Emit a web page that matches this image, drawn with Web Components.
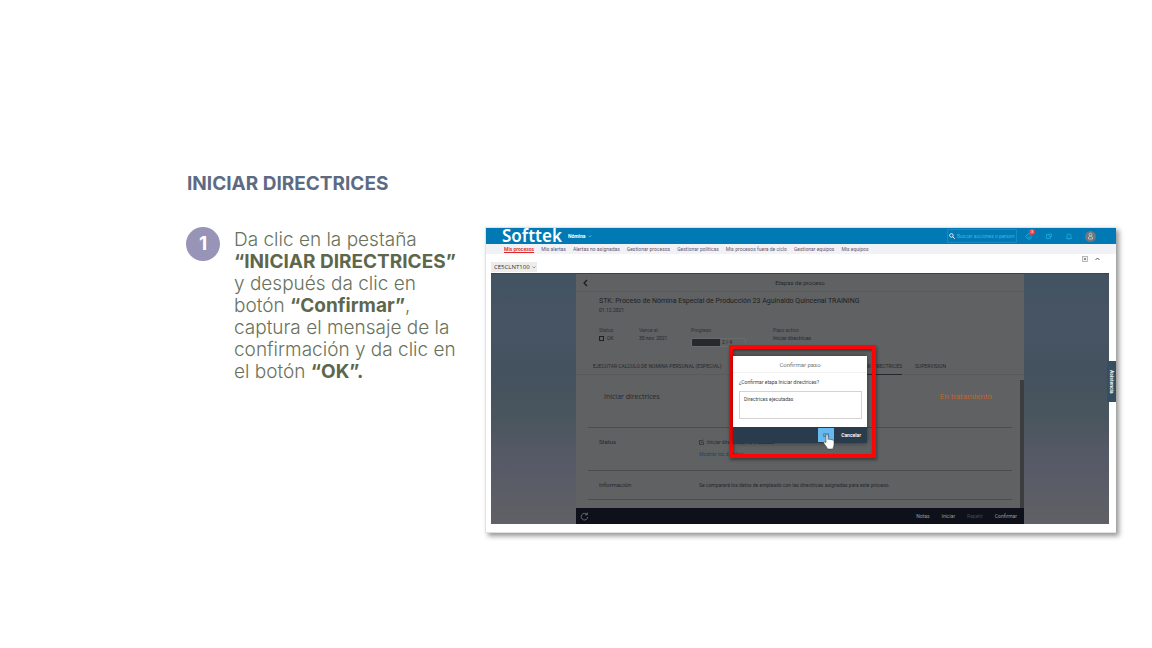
<!DOCTYPE html>
<html lang="es">
<head>
<meta charset="utf-8">
<meta name="viewport" content="width=device-width, initial-scale=1">
<title>Iniciar directrices</title>
<style>
body { margin: 0; background: #fff; font-family: Inter, "Noto Sans", sans-serif; }
</style>
</head>
<body>
<guide-slide>
  <span slot="title">INICIAR DIRECTRICES</span>
  <guide-step slot="steps" number="1">Da clic en la pestaña<br><b>“INICIAR DIRECTRICES”</b><br>y después da clic en<br>botón <b>“Confirmar”</b>,<br>captura el mensaje de la<br>confirmación y da clic en<br>el botón <b>“OK”.</b></guide-step>
  <payroll-app slot="figure">
    <process-panel slot="panel"></process-panel>
    <confirm-dialog slot="dialog"></confirm-dialog>
  </payroll-app>
</guide-slide>

<template id="guide-slide">
  <style>
    :host { display: grid; grid-template-columns: 272px minmax(0, 1fr); column-gap: 27px; row-gap: 32px; padding: 173px 36px 48px 186px; align-items: start; }
    h1 { grid-column: 1 / -1; margin: 0 0 0 1px; font-size: 19px; line-height: 22px; font-weight: 700; color: #5d6b82; }
  </style>
  <h1><slot name="title"></slot></h1>
  <slot name="steps"></slot>
  <slot name="figure"></slot>
</template>

<template id="guide-step">
  <style>
    :host { display: grid; grid-template-columns: 34px 1fr; gap: 14px; color: #69725c; white-space: nowrap; }
    .dot { width: 34px; height: 34px; border-radius: 50%; background: #9894b8; color: #fff; font-size: 19px; font-weight: 700; line-height: 34px; text-align: center; }
    p { margin: 2px 0 0; font-size: 19px; line-height: 22px; font-weight: 300; }
    ::slotted(b) { color: #5c674b; font-weight: 700; }
  </style>
  <div class="dot"></div>
  <p><slot></slot></p>
</template>

<template id="payroll-app">
  <style>
    :host { display: block; position: relative; background: #fff; border: 1px solid #dfe2e4; border-right: 0; box-shadow: 3px 3px 5px rgba(0,0,0,.42); font-family: Roboto, "Noto Sans", sans-serif; font-size: 5px; line-height: 8px; color: #444; }
    * { box-sizing: border-box; }
    header { display: flex; align-items: center; height: 16px; padding: 0 20px 0 16px; background: #0079b4; color: #fff; }
    .logo { font-family: "Noto Sans", sans-serif; font-size: 17px; line-height: 16px; font-weight: 600; margin-right: 6px; }
    select { appearance: none; border: 0; padding: 0; margin: 0; background: none; font: inherit; color: inherit; }
    header select { font-weight: 700; }
    .pick { display: flex; align-items: center; gap: 2px; }
    .search { display: flex; align-items: center; gap: 2px; width: 70px; height: 14px; margin-left: auto; margin-right: 8px; padding: 0 1px; border: 1px solid #168bc3; }
    .search input { flex: 1; min-width: 0; border: 0; padding: 0; background: none; font: inherit; color: #35b8e8; outline: 0; }
    .search input::placeholder { color: #35b8e8; opacity: 1; }
    .icons { display: flex; align-items: center; gap: 12px; }
    button { border: 0; padding: 0; background: none; font: inherit; color: inherit; display: block; }
    svg { display: block; }
    .bell { position: relative; }
    .count { position: absolute; left: 4px; top: -4px; width: 6px; height: 6px; border-radius: 50%; background: #ee4247; color: #fff; font-size: 4px; line-height: 6px; text-align: center; }
    .me { width: 11px; height: 11px; border-radius: 50%; background: #70777c; display: grid; place-items: center; }
    nav { display: flex; gap: 7px; height: 10px; padding: 1px 18px 0; background: #f1f2f5; }
    nav a { color: #665572; text-decoration: none; white-space: nowrap; }
    nav a[aria-current] { color: #e0272e; font-weight: 600; text-decoration: underline; }
    .strip { display: flex; justify-content: space-between; height: 19px; padding: 0 16px 0 5px; }
    .strip .pick { align-self: flex-end; height: 10px; margin-bottom: 1px; padding: 0 1px 0 3px; background: #ececec; font-size: 7px; color: #333; }
    .strip select { font-family: "Open Sans", sans-serif; font-size: 6px; }
    .tools { display: flex; gap: 7px; padding-top: 2px; align-items: center; height: 8px; }
    .stage { margin: 0 7px 8px 5px; border-top: 1px solid #304854; display: grid; grid-template-columns: 85px minmax(0,1fr) 85px; background: linear-gradient(#435361, #475464 20%, #44525f 40%, #4a565e 58%, #555966 72%, #5b5d66 86%, #606165); }
    .stage ::slotted(*) { grid-column: 2; }
    .help { position: absolute; right: 0; top: 133px; width: 9px; height: 41px; background: #354f61; color: #fff; writing-mode: vertical-rl; text-align: center; font-weight: 600; line-height: 9px; }
    .over { position: absolute; left: 243px; top: 117px; }
  </style>
  <header>
    <span class="logo">Softtek</span>
    <span class="pick"><select aria-label="Módulo"><option>Nómina</option></select><svg width="4" height="3" viewBox="0 0 4 3"><path d="M.5.5 2 2 3.500.5" fill="none" stroke="#46c0ef" stroke-width=".8"/></svg></span>
    <label class="search"><svg width="6" height="6" viewBox="0 0 6 6"><circle cx="2.400" cy="2.400" r="1.800" fill="none" stroke="#fff" stroke-width=".8"/><path d="m3.700 3.700 2 2" stroke="#fff"/></svg><input type="text" aria-label="Buscar" placeholder="Buscar acciones o person..."></label>
    <div class="icons">
      <button class="bell" aria-label="Tareas"><svg width="8" height="7" viewBox="0 0 8 7"><path d="M5 1H3L.8 3.500 3 6h2l2-2.500M3 3.500l1 1 2-2" fill="none" stroke="#27b2e4" stroke-width=".8"/></svg><span class="count">3</span></button>
      <button aria-label="Notas"><svg width="8" height="7" viewBox="0 0 8 7"><path d="M4 1.500H1.500v4h4V4M4 1h2.500v2.500H4z" fill="none" stroke="#27b2e4" stroke-width=".7"/></svg></button>
      <button aria-label="Avisos"><svg width="8" height="7" viewBox="0 0 8 7"><path d="M2 5V3a2 2 0 0 1 4 0v2l.6.5H1.400zM3.500 6.500h1" fill="none" stroke="#27b2e4" stroke-width=".7"/></svg></button>
      <button class="me" aria-label="Perfil"><svg width="7" height="8" viewBox="0 0 7 8"><circle cx="3.500" cy="2.500" r="1.400" fill="none" stroke="#ccd0d2" stroke-width=".8"/><path d="M1.500 7V6a2 2 0 0 1 4 0v1z" fill="none" stroke="#ccd0d2" stroke-width=".8"/></svg></button>
    </div>
  </header>
  <nav><a href="#procesos" aria-current="page">Mis procesos</a><a href="#alertas">Mis alertas</a><a href="#noasig">Alertas no asignadas</a><a href="#gproc">Gestionar procesos</a><a href="#gpol">Gestionar políticas</a><a href="#ciclo">Mis procesos fuera de ciclo</a><a href="#geq">Gestionar equipos</a><a href="#equipos">Mis equipos</a></nav>
  <div class="strip">
    <span class="pick"><select aria-label="Sistema"><option>CE5CLNT100</option></select><svg width="4" height="3" viewBox="0 0 4 3"><path d="M.5.5 2 2 3.500.5" fill="none" stroke="#777" stroke-width=".7"/></svg></span>
    <span class="tools"><button aria-label="Ampliar"><svg width="6" height="6" viewBox="0 0 6 6"><rect x=".5" y=".5" width="5" height="5" fill="#f2f2f2" stroke="#aaa" stroke-width=".8"/><path d="m2 2 2 2M4 2 2 4" stroke="#777" stroke-width=".8"/></svg></button><button aria-label="Contraer"><svg width="5" height="6" viewBox="0 0 5 6"><path d="m.5 4 2-2 2 2" fill="none" stroke="#555"/></svg></button></span>
  </div>
  <div class="stage"><slot name="panel"></slot></div>
  <button class="help">Asistencia</button>
  <div class="over"><slot name="dialog"></slot></div>
</template>

<template id="process-panel">
  <style>
    :host { display: block; background: #606163; color: #26282b; font-size: 5px; line-height: 8px; white-space: nowrap; }
    * { box-sizing: border-box; }
    button { border: 0; padding: 0; background: none; font: inherit; color: inherit; }
    svg { display: block; }
    h2, h3, h4, p, dl, dd { margin: 0; font-weight: 400; }
    .bar { display: grid; grid-template-columns: 14px 1fr 14px; align-items: center; height: 18px; padding: 0 7px; border-bottom: 1px solid #5a5b5d; text-align: center; }
    .bar h2 { font-size: 6px; line-height: 8px; }
    .head { padding: 4px 23px 0; height: 69px; }
    .head h3 { font-size: 7px; line-height: 10px; color: #1d1f22; }
    dl { display: grid; grid-template-columns: 40px 52px 82px 1fr; margin-top: 12px; }
    dd { display: flex; align-items: center; gap: 3px; }
    dt { color: #303235; }
    .meter { width: 55px; height: 9px; margin-top: 4px; border: 1px solid #696a6c; background: linear-gradient(90deg, #27292d 28px, transparent 28px); border-radius: 2px; padding-left: 30px; line-height: 7px; }
    .tabs { display: flex; height: 14px; padding: 1px 17px 0; border-bottom: 1px solid #595a5c; }
    .tabs button { height: 13px; padding: 0 0 4px; margin-right: 13px; line-height: 9px; }
    .tabs button:first-child { width: 127px; text-align: left; margin-right: 107px; }
    .tabs button[aria-selected=true] { width: 75px; text-align: right; border-bottom: 1px solid #24272b; }
    .body { border-right: 4px solid #3c3d3f; margin-top: 5px; padding: 0 8px 0 12px; }
    .lead { display: flex; justify-content: space-between; height: 47px; padding: 12px 20px 0 16px; font-size: 8px; line-height: 10px; }
    .lead h3 { font-family: "Open Sans", sans-serif; font-size: 7px; }
    .lead p { color: #c0642a; }
    .row { display: grid; grid-template-columns: 100px 1fr; padding: 10px 0 0 11px; height: 43px; border-top: 1px solid #4b4c4e; }
    .row.info { height: 38px; }
    .row.info::after { content: ""; grid-column: 1 / -1; margin: 7px 0 5px -11px; border-top: 1px solid #4b4c4e; }
    .row h4 { font-size: 6px; }
    .msg { display: flex; gap: 3px; align-items: center; }
    a { display: block; margin-top: 4px; color: #1c4565; text-decoration: none; }
    footer { display: flex; align-items: center; gap: 12px; height: 16px; padding: 0 7px 0 4px; background: #0e1119; color: #989ca3; }
    footer button:first-child { margin-right: auto; }
    footer button:disabled { color: #45494f; }
  </style>
  <div class="bar"><button aria-label="Atrás"><svg width="5" height="8" viewBox="0 0 5 8"><path d="M4 1 1 4l3 3" fill="none" stroke="#17191c" stroke-width="1.200"/></svg></button><h2>Etapas de proceso</h2></div>
  <div class="head">
    <h3>STK: Proceso de Nómina Especial de Producción 23 Aguinaldo Quincenal TRAINING</h3>
    <p>01.12.2021</p>
    <dl>
      <div><dt>Status</dt><dd><svg width="5" height="5" viewBox="0 0 5 5"><rect x=".5" y=".5" width="4" height="4" fill="none" stroke="#202124"/></svg>OK</dd></div>
      <div><dt>Vence el</dt><dd>30 nov. 2021</dd></div>
      <div><dt>Progreso</dt><dd class="meter" role="progressbar" aria-valuenow="2" aria-valuemax="4">2 / 4</dd></div>
      <div><dt>Paso activo</dt><dd>Iniciar directrices</dd></div>
    </dl>
  </div>
  <div class="tabs" role="tablist"><button role="tab">EJECUTAR CALCULO DE NOMINA PERSONAL (ESPECIAL)</button><button role="tab" aria-selected="true">INICIAR DIRECTRICES</button><button role="tab">SUPERVISION</button></div>
  <div class="body">
    <div class="lead"><h3>Iniciar directrices</h3><p>En tratamiento</p></div>
    <div class="row"><h4>Status</h4><div><div class="msg"><svg width="5" height="6" viewBox="0 0 5 6"><path d="M4.500 3v2.500h-4v-4H3M1.500 3l1 1L4.800.5" fill="none" stroke="#2b2d30" stroke-width=".7"/></svg>Iniciar directrices ha finalizado</div><a href="#detalles">Mostrar los detalles</a></div></div>
    <div class="row info"><h4>Información</h4><p>Se comparará los datos de empleado con las directrices asignadas para este proceso.</p></div>
  </div>
  <footer><button aria-label="Actualizar"><svg width="9" height="9" viewBox="0 0 9 9"><path d="M7 2.500A3.300 3.300 0 1 0 7.800 5M7.300.5v2.300H5" fill="none" stroke="#777b82" stroke-width=".8"/></svg></button><button>Notas</button><button>Iniciar</button><button disabled>Repetir</button><button>Confirmar</button></footer>
</template>

<template id="confirm-dialog">
  <style>
    :host { display: block; position: relative; width: 147px; height: 113px; border: 4px solid #fb0505; box-sizing: border-box; padding: 7px 5px 0 0; box-shadow: 1px 2px 3px rgba(0,0,0,.4), inset 1px 2px 3px rgba(0,0,0,.4); }
    * { box-sizing: border-box; }
    .box { background: #fff; box-shadow: 0 0 5px rgba(0,0,0,.5); color: #444; white-space: nowrap; }
    h2 { margin: 0; height: 17px; font-size: 6px; line-height: 17px; font-weight: 400; text-align: center; color: #777; border-bottom: 1px solid #f2f2f2; }
    label { display: block; padding: 5px 6px 0; line-height: 8px; }
    textarea { display: block; width: 123px; height: 28px; margin: 5px 0 0 6px; padding: 3px 4px; border: 1px solid #d3d3d3; resize: none; overflow: hidden; font: inherit; line-height: 8px; color: #444; background: #fff; outline: 0; }
    .foot { display: flex; justify-content: flex-end; gap: 7px; margin-top: 8px; padding: 1px 6px 0; height: 16px; background: #293c4e; color: #fff; }
    button { border: 0; padding: 0; height: 14px; background: none; color: inherit; font: inherit; font-weight: 600; }
    .ok { width: 16px; background: #67b9ef; color: #326f9e; }
    svg { position: absolute; left: 90px; top: 85px; }
  </style>
  <div class="box" role="dialog" aria-label="Confirmar paso">
    <h2>Confirmar paso</h2>
    <label for="msg">¿Confirmar etapa Iniciar directrices?</label>
    <textarea id="msg">Directrices ejecutadas</textarea>
    <div class="foot"><button class="ok">OK</button><button>Cancelar</button></div>
  </div>
  <svg width="13" height="16" viewBox="0 0 13 16" aria-hidden="true"><path d="M3 1.500c0-1.300 2-1.300 2 0v4c.3-.8 1.800-.7 2 .3.400-.7 1.700-.5 2 .4.500-.6 1.900-.3 2 .800v3.500c0 1.500-.8 2-1 4.500H4.500C4.200 13 2 11.500.8 9 .4 7.800 1.700 7.200 3 8.700z" fill="#fff" stroke="#333" stroke-width=".5"/></svg>
</template>

<script>
class TemplateElement extends HTMLElement {
  constructor() {
    super();
    this.attachShadow({ mode: "open" }).append(document.getElementById(this.localName).content.cloneNode(true));
  }
}
class GuideSlide extends TemplateElement {}
class GuideStep extends TemplateElement {
  connectedCallback() { this.shadowRoot.querySelector(".dot").textContent = this.getAttribute("number"); }
}
class PayrollApp extends TemplateElement {}
class ProcessPanel extends TemplateElement {}
class ConfirmDialog extends TemplateElement {}
customElements.define("guide-slide", GuideSlide);
customElements.define("guide-step", GuideStep);
customElements.define("payroll-app", PayrollApp);
customElements.define("process-panel", ProcessPanel);
customElements.define("confirm-dialog", ConfirmDialog);
</script>
</body>
</html>
